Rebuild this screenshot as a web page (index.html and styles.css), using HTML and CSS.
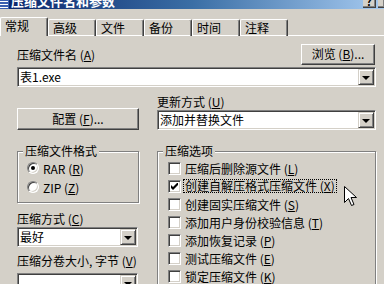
FILE: index.html
```html
<html>

<head>
	<title>压缩文件名和参数</title>
	<link rel="stylesheet" href="styles.css">
</head>
<body>
	<div class="titlebar">
		<span class="appicon">
			<svg width="9" height="9" viewBox="0 0 9 9">
				<rect x="0" y="0" width="9" height="9" fill="#3a5fb0"/>
				<rect x="0" y="1" width="8" height="1" fill="#fff"/>
				<rect x="0" y="4" width="8" height="1" fill="#fff"/>
				<rect x="0" y="7" width="8" height="1" fill="#fff"/>
			</svg>
		</span>
		<span class="caption">压缩文件名和参数</span>
		<span class="spacer"></span>
		<span class="tbtn">?</span>
		<span class="tbtn last"></span>
	</div>

	<div class="tabs">
		<div class="tab active">常规</div>
		<div class="tab">高级</div>
		<div class="tab">文件</div>
		<div class="tab">备份</div>
		<div class="tab">时间</div>
		<div class="tab">注释</div>
		<div class="tabfill"></div>
	</div>

	<div class="panel">
		<div class="namerow">
			<span class="label">压缩文件名 (<u>A</u>)</span>
			<div class="button browse">浏览 (<u>B</u>)...</div>
		</div>
		<div class="combo wide">
			<span class="value">表1.exe</span>
			<span class="drop"></span>
		</div>

		<div class="columns">
			<div class="col left">
				<div class="button config">配置 (<u>F</u>)...</div>

				<div class="group">
					<div class="group-title">压缩文件格式</div>
					<div class="radio-row first">
						<span class="radio"><span class="dot"></span></span>
						<span>RAR (<u>R</u>)</span>
					</div>
					<div class="radio-row">
						<span class="radio"></span>
						<span>ZIP (<u>Z</u>)</span>
					</div>
				</div>

				<div class="label method">压缩方式 (<u>C</u>)</div>
				<div class="combo small">
					<span class="value">最好</span>
					<span class="drop"></span>
				</div>

				<div class="label volume">压缩分卷大小, 字节 (<u>V</u>)</div>
				<div class="combo small vol">
					<span class="value"></span>
					<span class="drop"></span>
				</div>
			</div>

			<div class="col right">
				<div class="label update">更新方式 (<u>U</u>)</div>
				<div class="combo mid">
					<span class="value">添加并替换文件</span>
					<span class="drop"></span>
				</div>

				<div class="group options">
					<div class="group-title">压缩选项</div>
					<div class="check-row first"><span class="check"></span><span>压缩后删除源文件 (<u>L</u>)</span></div>
					<div class="check-row">
						<span class="check">
							<svg width="7" height="7" viewBox="0 0 7 7"><path d="M0 2v3l2 2 5-5V-1L2 4z" fill="#000"/></svg>
						</span>
						<span class="focus">创建自解压格式压缩文件 (<u>X</u>)</span>
					</div>
					<div class="check-row"><span class="check"></span><span>创建固实压缩文件 (<u>S</u>)</span></div>
					<div class="check-row"><span class="check"></span><span>添加用户身份校验信息 (<u>T</u>)</span></div>
					<div class="check-row"><span class="check"></span><span>添加恢复记录 (<u>P</u>)</span></div>
					<div class="check-row"><span class="check"></span><span>测试压缩文件 (<u>E</u>)</span></div>
					<div class="check-row"><span class="check"></span><span>锁定压缩文件 (<u>K</u>)</span></div>
				</div>
			</div>
		</div>
	</div>

	<svg class="cursor" width="14" height="21" viewBox="0 0 14 21">
		<path d="M0.5 0.5v16l4-4 3 7 2.5-1-3-7h5.5z" fill="#fff" stroke="#000" stroke-width="1"/>
	</svg>
</body>
</html>
```

FILE: styles.css
```css
body{
	margin: 0;
	width: 384px;
	height: 284px;
	overflow: hidden;
	position: relative;
	background-color: #d4d0c8;
	font-family: "Noto Sans CJK SC", "Liberation Sans", sans-serif;
	font-size: 12px;
	color: #000;
}

u{
	text-decoration: underline;
}

/* title bar */
.titlebar{
	height: 9px;
	display: flex;
	overflow: hidden;
	background: linear-gradient(to right, #0a246a, #3a6ea5 50%, #a6caf0);
}

.appicon{
	width: 9px;
	height: 9px;
}

.caption{
	margin: -6px 0 0 2px;
	line-height: 14px;
	font-size: 13px;
	font-weight: bold;
	color: #fff;
}

.spacer{
	flex: 1;
}

.tbtn{
	box-sizing: border-box;
	width: 13px;
	height: 8px;
	margin-left: 2px;
	background: #d4d0c8;
	border-right: 1px solid #404040;
	border-bottom: 1px solid #404040;
	box-shadow: inset -1px -1px #808080;
	font-size: 11px;
	font-weight: bold;
	line-height: 2px;
	text-align: center;
	overflow: hidden;
}

.tbtn.last{
	width: 7px;
	margin-right: -1px;
}

/* tabs */
.tabs{
	display: flex;
	align-items: flex-end;
	height: 19px;
	margin-top: 8px;
}

.tab{
	box-sizing: border-box;
	width: 48px;
	height: 17px;
	padding: 1px 0 0 4px;
	line-height: 14px;
	border-top: 1px solid #fff;
	border-left: 1px solid #fff;
	border-right: 1px solid #404040;
	border-radius: 2px 2px 0 0;
	box-shadow: inset -1px 0 #808080, inset 0 -1px #fff;
}

.tab.active{
	height: 19px;
	box-shadow: inset -1px 0 #808080;
}

.tabfill{
	flex: 1;
	height: 1px;
	background: #fff;
}

/* panel */
.panel{
	padding-left: 17px;
}

.label{
	line-height: 14px;
	white-space: nowrap;
}

.namerow{
	display: flex;
	justify-content: space-between;
	align-items: center;
	width: 358px;
	margin-top: 8px;
}

.button{
	box-sizing: border-box;
	text-align: center;
	border: 1px solid;
	border-color: #fff #404040 #404040 #fff;
	box-shadow: inset -1px -1px #808080;
}

.browse{
	width: 74px;
	height: 21px;
	line-height: 18px;
}

.config{
	width: 122px;
	height: 22px;
	line-height: 19px;
	margin-top: 21px;
}

/* combo boxes */
.combo{
	box-sizing: border-box;
	display: flex;
	height: 20px;
	padding: 1px;
	background: #fff;
	border: 1px solid;
	border-color: #808080 #fff #fff #808080;
	box-shadow: inset 1px 1px #404040, inset -1px -1px #d4d0c8;
}

.combo .value{
	flex: 1;
	padding-left: 1px;
	line-height: 16px;
	white-space: nowrap;
	overflow: hidden;
}

.drop{
	box-sizing: border-box;
	width: 16px;
	height: 16px;
	display: flex;
	align-items: center;
	justify-content: center;
	background: #d4d0c8;
	border: 1px solid;
	border-color: #d4d0c8 #404040 #404040 #d4d0c8;
	box-shadow: inset 1px 1px #fff, inset -1px -1px #808080;
}

.drop::after{
	content: "";
	border-left: 4px solid transparent;
	border-right: 4px solid transparent;
	border-top: 4px solid #000;
	margin-top: 1px;
}

.wide{
	width: 359px;
	margin-top: 2px;
}

.mid{
	width: 219px;
	margin-top: 1px;
}

.small{
	width: 121px;
	margin-top: 1px;
}

.small.vol{
	margin-top: 5px;
}

/* two columns */
.columns{
	display: flex;
	gap: 18px;
}

.col.left{
	width: 122px;
}

.col.right{
	width: 219px;
}

.update{
	margin-top: 8px;
}

.method{
	margin-top: 9px;
}

.volume{
	margin-top: 7px;
}

/* group boxes */
.group{
	margin-top: 21px;
	padding-bottom: 8px;
	border: 1px solid #808080;
	box-shadow: inset 1px 1px #fff, 1px 1px #fff;
}

.group.options{
	padding-bottom: 20px;
}

.group-title{
	width: fit-content;
	margin: -8px 0 0 5px;
	padding: 0 2px;
	line-height: 14px;
	background: #d4d0c8;
}

.radio-row{
	display: flex;
	align-items: center;
	gap: 4px;
	height: 14px;
	padding-left: 9px;
	margin-top: 5px;
}

.radio-row.first{
	margin-top: 3px;
}

.radio{
	box-sizing: border-box;
	width: 12px;
	height: 12px;
	display: flex;
	align-items: center;
	justify-content: center;
	border-radius: 50%;
	background: #fff;
	border: 1px solid;
	border-color: #808080 #fff #fff #808080;
	box-shadow: inset 1px 1px #404040, inset -1px -1px #d4d0c8;
}

.dot{
	width: 4px;
	height: 4px;
	border-radius: 50%;
	background: #000;
}

.check-row{
	display: flex;
	align-items: center;
	gap: 4px;
	height: 18px;
	padding-left: 10px;
	white-space: nowrap;
}

.check-row.first{
	margin-top: 1px;
}

.check{
	box-sizing: border-box;
	width: 13px;
	height: 13px;
	display: flex;
	align-items: center;
	justify-content: center;
	background: #fff;
	border: 1px solid;
	border-color: #808080 #fff #fff #808080;
	box-shadow: inset 1px 1px #404040, inset -1px -1px #d4d0c8;
}

.focus{
	margin-left: -2px;
	padding: 0 1px;
	line-height: 12px;
	border: 1px dotted #000;
}

.cursor{
	position: absolute;
	left: 344px;
	top: 186px;
}
```
